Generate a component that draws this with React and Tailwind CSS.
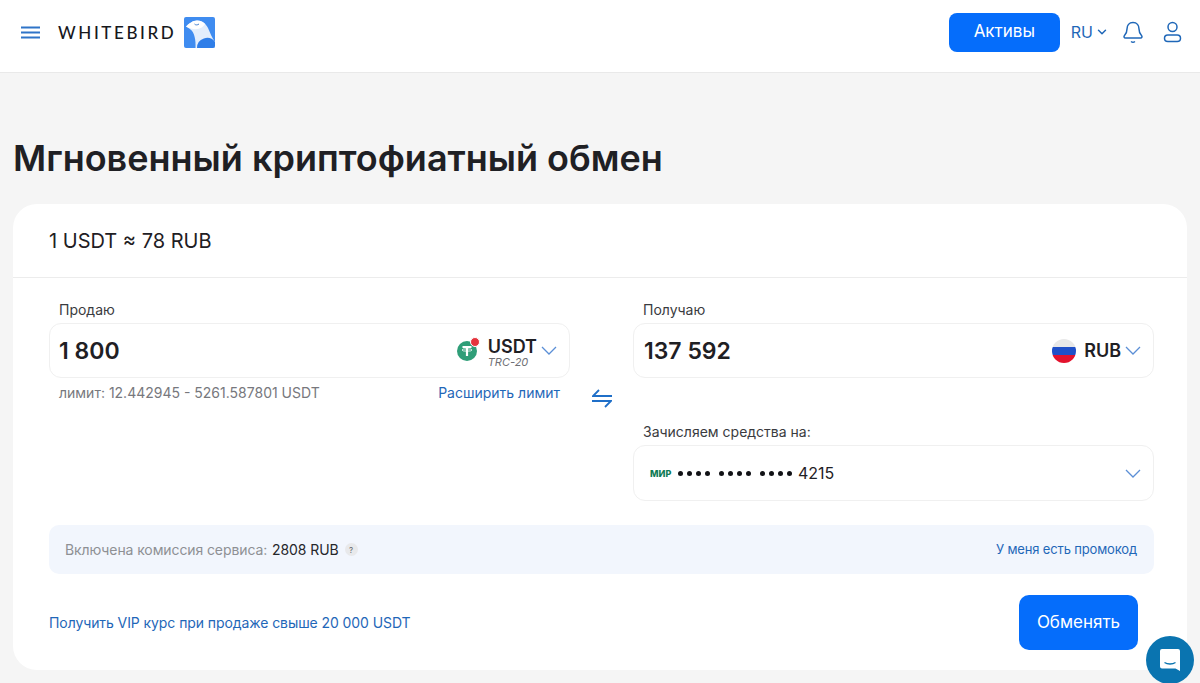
import { ChevronDown } from 'lucide-react';

function Chevron({ className }) {
  return (
    <svg className={className} width="16" height="9" viewBox="0 0 16 9" fill="none" stroke="#5b8fd6" strokeWidth="1.3">
      <path d="M1 1l7 7 7-7" />
    </svg>
  );
}

function BirdLogo() {
  return (
    <svg width="31" height="31" viewBox="0 0 31 31">
      <rect width="31" height="31" rx="2" fill="#3f8cf0" />
      <path d="M2 9.500C5 6.500 9 3.500 13 3.500c5.500 0 9 3.500 11 7.500 2 4.500 4 10 7 14v4a2 2 0 0 1-2 2H11.500C12 23 10.500 15.500 6.500 12.500 5.500 11.500 3.500 10.500 2 9.500z" fill="#e3eefc" />
      <path d="M2 9.500C5 6.500 9 3.500 13 3.500c3.500 0 6 1.500 8 3.500-1.500 3-5 5-9.500 5.200-2.500 0-6-1-9.500-2.700z" fill="#fff" />
      <path d="M13 31a10 10 0 0 1 18-6v4a2 2 0 0 1-2 2z" fill="#2f7ee8" />
      <path d="M10.500 7c1 1.200 3 1.200 4.500 0" fill="none" stroke="#2f6fc6" strokeWidth="0.9" />
    </svg>
  );
}

function Tether() {
  return (
    <div className="relative h-[20px] w-[20px] rounded-full bg-[#2f9e78] flex items-center justify-center">
      <svg width="14" height="14" viewBox="0 0 14 14" fill="none" stroke="#fff">
        <path d="M2.500 3h9" strokeWidth="2" />
        <path d="M7 3v9" strokeWidth="2.200" />
        <ellipse cx="7" cy="6" rx="5" ry="1.200" strokeWidth="0.800" />
      </svg>
      <span className="absolute -right-[3px] -top-[4px] h-[10px] w-[10px] rounded-full bg-[#e5343d] border border-white" />
    </div>
  );
}

function RuFlag() {
  return (
    <div className="h-[24px] w-[24px] rounded-full overflow-hidden flex flex-col">
      <div className="h-[8px] bg-[#e8e8e8]" />
      <div className="h-[8px] bg-[#1f50c8]" />
      <div className="h-[8px] bg-[#e3122d]" />
    </div>
  );
}

function DotGroup() {
  return (
    <span className="flex items-center gap-[4px]">
      <span className="h-[5px] w-[5px] rounded-full bg-[#111216]" />
      <span className="h-[5px] w-[5px] rounded-full bg-[#111216]" />
      <span className="h-[5px] w-[5px] rounded-full bg-[#111216]" />
      <span className="h-[5px] w-[5px] rounded-full bg-[#111216]" />
    </span>
  );
}

export default function App() {
  return (
    <div className="relative h-[683px] w-[1200px] overflow-hidden bg-[#f5f5f5] text-[#1f2024] font-['Inter',sans-serif]">
      <header className="h-[73px] bg-white border-b border-[#e9e9e9] flex items-center pl-[21px] pr-[18px] pb-[8px]">
        <svg width="19" height="13" viewBox="0 0 19 13" stroke="#2f74c8" strokeWidth="1.800">
          <path d="M0 1.500h19M0 6.500h19M0 11.500h19" />
        </svg>
        <span className="ml-[18px] font-['Lato',sans-serif] text-[17px] font-medium tracking-[2.600px] text-[#17181c] leading-none">WHITEBIRD</span>
        <div className="ml-[8px]">
          <BirdLogo />
        </div>
        <div className="ml-auto flex items-center">
          <button className="h-[39px] w-[111px] rounded-[8px] bg-[#056dfb] text-white text-[17px]">Активы</button>
          <span className="ml-[11px] text-[#1f67b8] text-[16px]">RU</span>
          <ChevronDown className="ml-[2px] text-[#1f67b8]" size={14} strokeWidth={2.500} />
          <svg className="ml-[13px]" width="22" height="24" viewBox="0 0 22 24" fill="none" stroke="#1f67b8" strokeWidth="1.500">
            <path d="M11 2.500c-4 0-6 3-6 6.500 0 3-1 5-2.500 6.500-1 1.200-.4 2.500 1 2.500h15c1.400 0 2-1.300 1-2.500C18 14 17 12 17 9c0-3.500-2-6.500-6-6.500z" />
            <path d="M9 21.500c1 .7 3 .7 4 0" />
          </svg>
          <svg className="ml-[19px]" width="19" height="22" viewBox="0 0 19 22" fill="none" stroke="#1f67b8" strokeWidth="1.500">
            <circle cx="9.500" cy="6" r="4.500" />
            <rect x="1.500" y="14" width="16" height="6.500" rx="3.250" />
          </svg>
        </div>
      </header>

      <main className="px-[13px]">
        <h1 className="mt-[63px] text-[36px] leading-[44px] font-semibold">Мгновенный криптофиатный обмен</h1>

        <section className="mt-[24px] h-[466px] rounded-[24px] bg-white">
          <div className="h-[74px] border-b border-[#ececec] pl-[36px] flex items-center text-[20px]">1 USDT ≈ 78 RUB</div>

          <div className="pl-[36px] pr-[33px] pt-[23px]">
            <div className="flex">
              <div className="w-[521px]">
                <div className="pl-[10px] text-[14px] leading-[17px] text-[#3a3b40]">Продаю</div>
                <div className="mt-[5px] h-[55px] rounded-[12px] border border-[#f0f0f0] flex items-center pl-[9px] pr-[12px]">
                  <span className="text-[23px] font-semibold pt-[1px]">1 800</span>
                  <div className="ml-auto flex items-center">
                    <Tether />
                    <div className="ml-[11px] flex flex-col pt-[6px]">
                      <span className="text-[18px] leading-[16px] font-semibold">USDT</span>
                      <span className="text-[11px] leading-[12px] italic text-[#6f7075] mt-[1px]">TRC-20</span>
                    </div>
                    <Chevron className="ml-[4px]" />
                  </div>
                </div>
                <div className="mt-[5px] pl-[10px] pr-[10px] flex justify-between text-[14px] leading-[19px]">
                  <span className="text-[#77787d]">лимит: 12.442945 - 5261.587801 USDT</span>
                  <span className="text-[#1f67b8]">Расширить лимит</span>
                </div>
              </div>

              <div className="w-[63px] flex justify-center pt-[88px] shrink-0">
                <svg className="h-[19px]" width="20" height="19" viewBox="0 0 20 19" fill="none" stroke="#1f6fc8" strokeWidth="1.800">
                  <path d="M7 1L1 7h19M13 18l6-6H0" />
                </svg>
              </div>

              <div className="w-[521px]">
                <div className="pl-[10px] text-[14px] leading-[17px] text-[#3a3b40]">Получаю</div>
                <div className="mt-[5px] h-[55px] rounded-[12px] border border-[#f0f0f0] flex items-center pl-[10px] pr-[12px]">
                  <span className="text-[23px] font-semibold pt-[1px]">137 592</span>
                  <div className="ml-auto flex items-center">
                    <RuFlag />
                    <span className="ml-[8px] text-[18px] font-semibold">RUB</span>
                    <Chevron className="ml-[4px]" />
                  </div>
                </div>
                <div className="mt-[45px] pl-[10px] text-[14px] leading-[17px] text-[#3a3b40]">Зачисляем средства на:</div>
                <div className="mt-[5px] h-[56px] rounded-[12px] border border-[#f0f0f0] flex items-center pl-[16px] pr-[12px]">
                  <span className="text-[9px] font-extrabold text-[#0f7a55] leading-none w-[28px]">МИР</span>
                  <span className="flex items-center gap-[9px]">
                    <DotGroup />
                    <DotGroup />
                    <DotGroup />
                  </span>
                  <span className="ml-[6px] text-[16px] text-[#1f2024]">4215</span>
                  <Chevron className="ml-auto" />
                </div>
              </div>
            </div>

            <div className="mt-[24px] h-[49px] rounded-[10px] bg-[#f2f6fd] flex items-center pl-[16px] pr-[17px] text-[14px] tracking-[-0.1px]">
              <span className="text-[#8e9094]">Включена комиссия сервиса:</span>
              <span className="ml-[5px] text-[#26272b]">2808 RUB</span>
              <span className="ml-[6px] h-[13px] w-[13px] rounded-full bg-[#e8e9eb] text-[#66676b] text-[8px] flex items-center justify-center">?</span>
              <span className="ml-auto text-[#1f67b8] text-[13px] tracking-[-0.15px]">У меня есть промокод</span>
            </div>

            <div className="mt-[21px] flex items-center justify-between pr-[16px]">
              <span className="text-[14px] tracking-[-0.08px] text-[#1f67b8]">Получить VIP курс при продаже свыше 20 000 USDT</span>
              <button className="h-[55px] w-[119px] rounded-[10px] bg-[#056dfb] text-white text-[17px]">Обменять</button>
            </div>
          </div>
        </section>
      </main>

      <div className="absolute left-[1146px] top-[636px] h-[48px] w-[48px] rounded-full bg-[#0a74b0] flex items-center justify-center">
        <svg width="22" height="24" viewBox="0 0 22 24">
          <path d="M3 1h16a2 2 0 0 1 2 2v20l-4.500-2.500H3a2 2 0 0 1-2-2V3a2 2 0 0 1 2-2z" fill="#fff" />
          <path d="M5.500 14.500c3 2 8 2 11 0" fill="none" stroke="#0a74b0" strokeWidth="1.300" />
        </svg>
      </div>
    </div>
  );
}
